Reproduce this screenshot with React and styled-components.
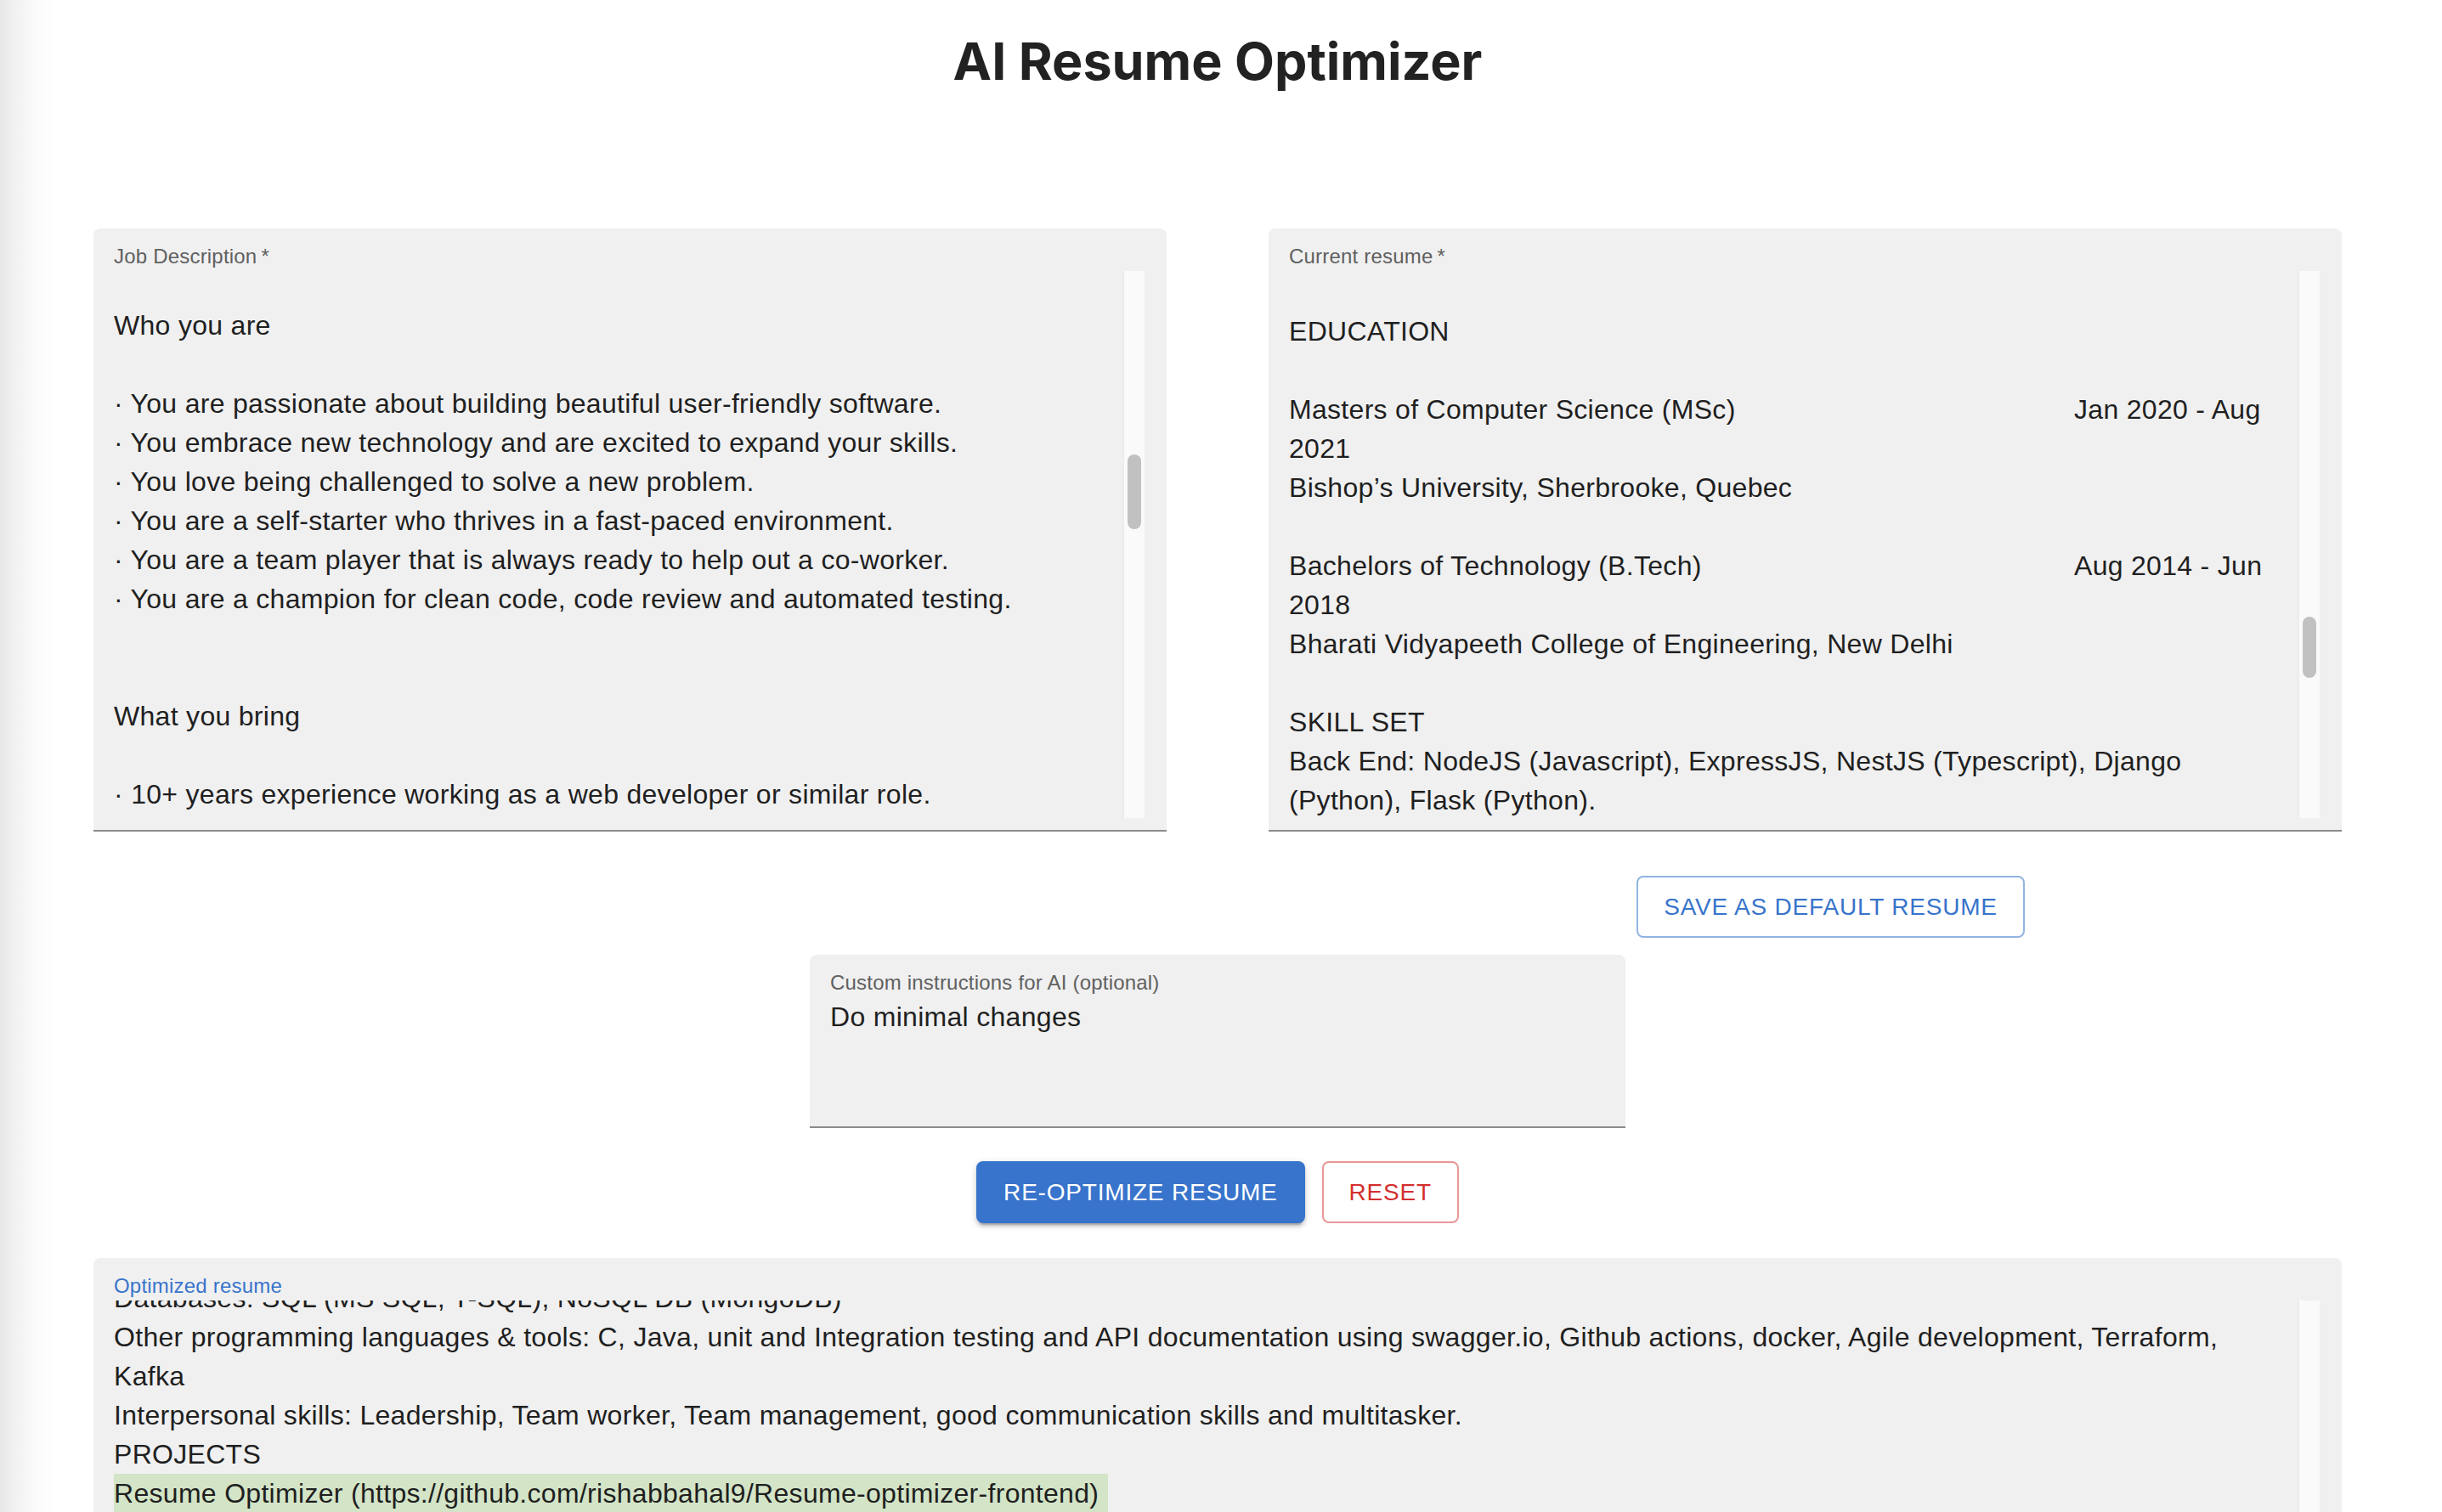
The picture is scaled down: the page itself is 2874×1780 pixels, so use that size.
import React from 'react';
import styled, { createGlobalStyle } from 'styled-components';

const GlobalStyle = createGlobalStyle`
  * {
    box-sizing: border-box;
  }
  html, body {
    margin: 0;
    padding: 0;
    height: 100%;
    overflow: hidden;
  }
  body {
    background: linear-gradient(90deg, #e8e8e8 0px, #f2f2f2 20px, #fbfbfb 44px, #ffffff 64px);
    font-family: "Liberation Sans", Helvetica, Arial, sans-serif;
    color: #1f1f1f;
  }
`;

const Page = styled.main`
  padding: 35px 118px 0 110px;
`;

const Title = styled.h1`
  margin: 0 0 160px;
  text-align: center;
  font-family: Inter, "Liberation Sans", sans-serif;
  font-weight: 700;
  font-size: 61px;
  line-height: 74px;
  color: #222222;
`;

const FieldGrid = styled.div`
  display: grid;
  grid-template-columns: 1fr 1fr;
  column-gap: 120px;
`;

const Field = styled.div`
  display: flex;
  flex-direction: column;
  background: #f0f0f0;
  border-radius: 8px 8px 0 0;
  border-bottom: ${(p) => (p.$open ? 'none' : '2px solid #8b8b8b')};
  padding: 16px 26px ${(p) => (p.$open ? '0' : '14px')} 24px;
`;

const Label = styled.label`
  display: block;
  height: 34px;
  font-size: 24px;
  line-height: 34.5px;
  letter-spacing: 0.2px;
  color: ${(p) => (p.$focused ? '#3874cb' : '#606060')};
`;

const Body = styled.div`
  display: flex;
  height: ${(p) => p.$rows * 46}px;
`;

const Viewport = styled.div`
  flex: 1;
  min-width: 0;
  overflow: hidden;
`;

const Lines = styled.div`
  margin-top: ${(p) => p.$offset}px;
`;

const Line = styled.div`
  font-size: 32px;
  line-height: 46px;
  min-height: 46px;
  letter-spacing: 0.3px;
  white-space: pre;
`;

const DateLine = styled(Line)`
  display: flex;
`;

const DateLead = styled.span`
  width: ${(p) => p.$width}px;
  flex: none;
`;

const Mark = styled.span`
  display: inline-block;
  background: #d3e4c7;
  padding-right: 11px;
`;

const Track = styled.div`
  flex: none;
  width: 26px;
  background: #fafafa;
  border-left: 2px solid #ececec;
`;

const Thumb = styled.div`
  width: 16px;
  height: ${(p) => p.$size}px;
  margin: ${(p) => p.$top}px 0 0 4px;
  border-radius: 8px;
  background: #c1c1c1;
`;

const SaveRow = styled.div`
  display: grid;
  grid-template-columns: 1fr 1fr;
  column-gap: 120px;
  margin-top: 52px;
`;

const SaveCell = styled.div`
  grid-column: 2;
  display: flex;
  justify-content: center;
  padding-left: 60px;
`;

const CustomWrap = styled.div`
  width: 960px;
  margin: 20px auto 0;
`;

const Actions = styled.div`
  display: flex;
  justify-content: center;
  gap: 20px;
  margin-top: 39px;
`;

const OptimizedWrap = styled.div`
  margin-top: 41px;
`;

const BaseButton = styled.button`
  font-family: "Liberation Sans", Helvetica, Arial, sans-serif;
  font-size: 28px;
  line-height: 49px;
  letter-spacing: 0.8px;
  text-transform: uppercase;
  border-radius: 8px;
  cursor: pointer;
`;

const OutlinedButton = styled(BaseButton)`
  padding: 10px 30px;
  background: transparent;
  color: ${(p) => (p.$tone === 'error' ? '#d32f2f' : '#3874cb')};
  border: 2px solid ${(p) => (p.$tone === 'error' ? 'rgba(211, 47, 47, 0.5)' : 'rgba(56, 116, 203, 0.55)')};
`;

const ContainedButton = styled(BaseButton)`
  padding: 12px 32px;
  border: none;
  background: #3874cb;
  color: #ffffff;
  box-shadow: 0px 6px 2px -4px rgba(0, 0, 0, 0.2), 0px 4px 4px 0px rgba(0, 0, 0, 0.14),
    0px 2px 10px 0px rgba(0, 0, 0, 0.12);
`;

const jobLines = [
  '',
  'Who you are',
  '',
  '· You are passionate about building beautiful user-friendly software.',
  '· You embrace new technology and are excited to expand your skills.',
  '· You love being challenged to solve a new problem.',
  '· You are a self-starter who thrives in a fast-paced environment.',
  '· You are a team player that is always ready to help out a co-worker.',
  '· You are a champion for clean code, code review and automated testing.',
  '',
  '',
  'What you bring',
  '',
  '· 10+ years experience working as a web developer or similar role.',
  '',
];

const resumeLines = [
  '',
  'EDUCATION',
  '',
  { lead: 'Masters of Computer Science (MSc)', date: 'Jan 2020 - Aug' },
  '2021',
  'Bishop’s University, Sherbrooke, Quebec',
  '',
  { lead: 'Bachelors of Technology (B.Tech)', date: 'Aug 2014 - Jun' },
  '2018',
  'Bharati Vidyapeeth College of Engineering, New Delhi',
  '',
  'SKILL SET',
  'Back End: NodeJS (Javascript), ExpressJS, NestJS (Typescript), Django',
  '(Python), Flask (Python).',
  '',
];

const optimizedLines = [
  'Databases: SQL (MS SQL, T-SQL), NoSQL DB (MongoDB)',
  'Other programming languages & tools: C, Java, unit and Integration testing and API documentation using swagger.io, Github actions, docker, Agile development, Terraform,',
  'Kafka',
  'Interpersonal skills: Leadership, Team worker, Team management, good communication skills and multitasker.',
  'PROJECTS',
  { mark: 'Resume Optimizer (https://github.com/rishabbahal9/Resume-optimizer-frontend)' },
  'Built a web app that tailors resumes to job descriptions using OpenAI.',
  '',
];

const TextLines = ({ lines }) =>
  lines.map((line, i) => {
    if (typeof line === 'string') return <Line key={i}>{line}</Line>;
    if (line.mark) {
      return (
        <Line key={i}>
          <Mark>{line.mark}</Mark>
        </Line>
      );
    }
    return (
      <DateLine key={i}>
        <DateLead $width={924}>{line.lead}</DateLead>
        <span>{line.date}</span>
      </DateLine>
    );
  });

const TextField = ({ label, required, focused, lines, rows, offset, thumb, open }) => (
  <Field $open={open}>
    <Label $focused={focused}>
      {label}
      {required ? '\u2009*' : ''}
    </Label>
    <Body $rows={rows}>
      <Viewport>
        <Lines $offset={offset}>
          <TextLines lines={lines} />
        </Lines>
      </Viewport>
      <Track>{thumb && <Thumb $top={thumb.top} $size={thumb.size} />}</Track>
    </Body>
  </Field>
);

const App = () => (
  <>
    <GlobalStyle />
    <Page>
      <Title>AI Resume Optimizer</Title>
      <FieldGrid>
        <TextField
          label="Job Description"
          required
          lines={jobLines}
          rows={14}
          offset={-5}
          thumb={{ top: 216, size: 88 }}
        />
        <TextField
          label="Current resume"
          required
          lines={resumeLines}
          rows={14}
          offset={2}
          thumb={{ top: 407, size: 72 }}
        />
      </FieldGrid>
      <SaveRow>
        <SaveCell>
          <OutlinedButton>Save as default resume</OutlinedButton>
        </SaveCell>
      </SaveRow>
      <CustomWrap>
        <Field>
          <Label>Custom instructions for AI (optional)</Label>
          <Body $rows={3}>
            <Viewport>
              <Line>Do minimal changes</Line>
            </Viewport>
          </Body>
        </Field>
      </CustomWrap>
      <Actions>
        <ContainedButton>Re-optimize resume</ContainedButton>
        <OutlinedButton $tone="error">Reset</OutlinedButton>
      </Actions>
      <OptimizedWrap>
        <TextField
          label="Optimized resume"
          focused
          open
          lines={optimizedLines}
          rows={8}
          offset={-26}
        />
      </OptimizedWrap>
    </Page>
  </>
);

export default App;
